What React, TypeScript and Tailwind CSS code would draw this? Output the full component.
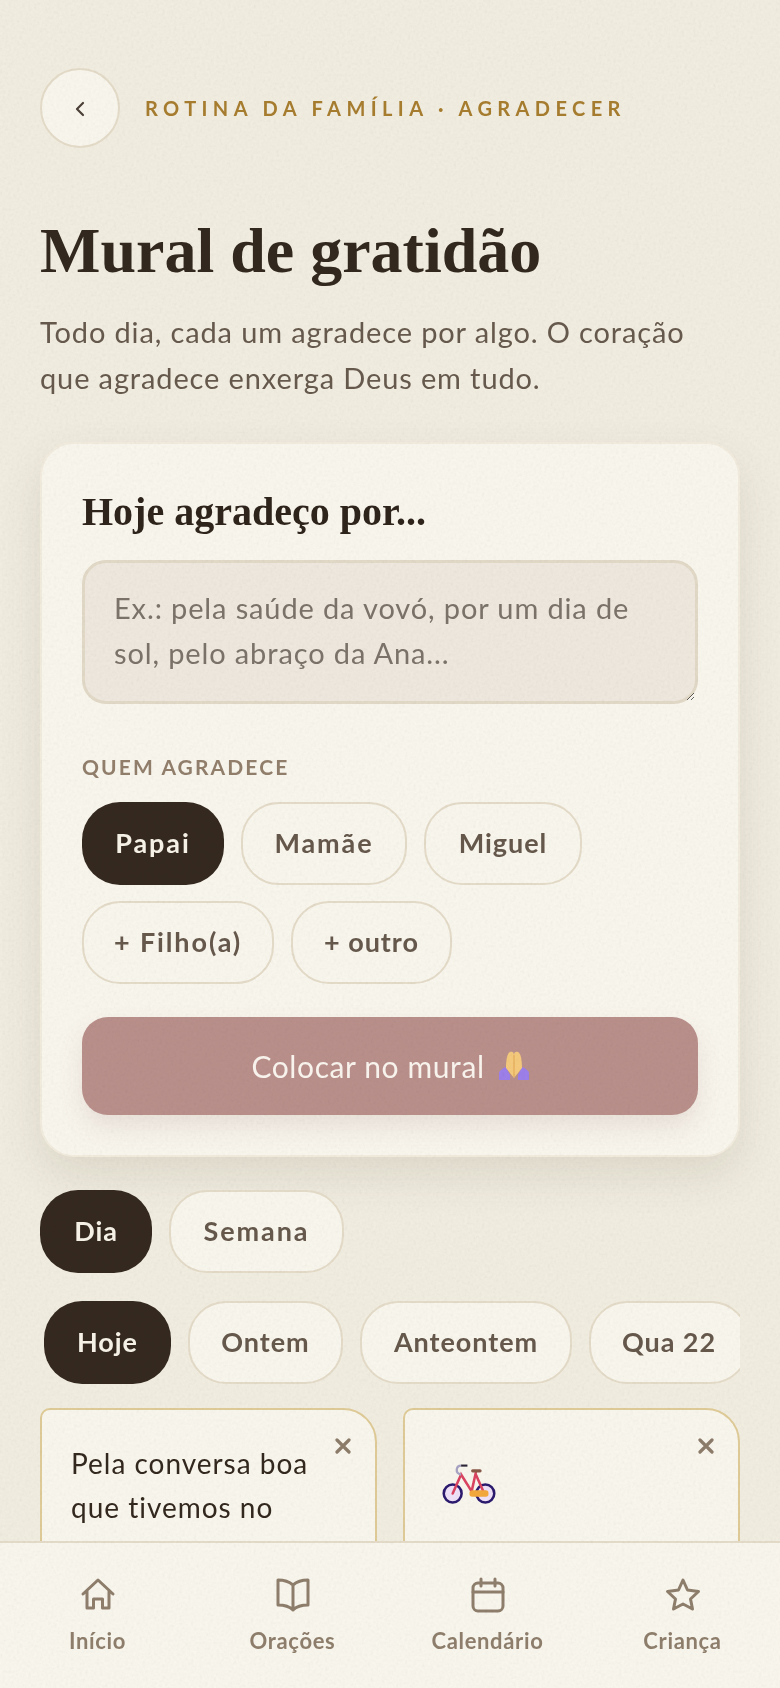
const serif = "font-['Liberation_Serif',serif]";

function PrayingHands() {
  return (
    <svg viewBox="0 0 30 30" className="h-[30px] w-[30px]" aria-hidden="true">
      <path d="M0 29V22C0 20 4 17 7 16L11 24V29Z" fill="#9d80ea" />
      <path d="M30 29V22C30 20 26 17 23 16L19 24V29Z" fill="#9d80ea" />
      <path d="M15 27L7 17C7 10 8 2 11 1C13 0 15 1 15 4C15 1 17 0 19 1C22 2 23 10 23 17Z" fill="#f6cb7d" />
      <path d="M15 4V26" stroke="#e2a755" strokeWidth="1" />
    </svg>
  );
}

function Bicycle() {
  return (
    <svg viewBox="0 0 51 38" className="h-[40px] w-[54px]" aria-hidden="true" fill="none">
      <circle cx="10" cy="28" r="8.5" fill="#f0e2f8" stroke="#2b1a6e" strokeWidth="2.4" />
      <circle cx="41" cy="28" r="8.5" fill="#f0e2f8" stroke="#2b1a6e" strokeWidth="2.4" />
      <path d="M10 28L18 10L28 26M32 8L28 26M32 10L40 28" stroke="#dc4460" strokeWidth="2.4" strokeLinecap="round" />
      <path d="M29 6.5H36" stroke="#8a5a48" strokeWidth="3" strokeLinecap="round" />
      <path d="M18 10C12 9 13 1.5 18 1.5" stroke="#a9a4c4" strokeWidth="2.2" />
      <path d="M18 1.5H24" stroke="#2b2436" strokeWidth="2" />
      <rect x="26" y="25" width="18" height="6" rx="2.5" fill="#f5a93c" />
    </svg>
  );
}

function TabIcon({ children }: { children: React.ReactNode }) {
  return (
    <svg
      viewBox="0 0 36 36"
      className="h-9 w-9"
      fill="none"
      stroke="currentColor"
      strokeWidth="3"
      strokeLinecap="round"
      strokeLinejoin="round"
      aria-hidden="true"
    >
      {children}
    </svg>
  );
}

function Pill({
  label,
  width,
  active,
  strong,
  wide,
}: {
  label: string;
  width: string;
  active?: boolean;
  strong?: boolean;
  wide?: boolean;
}) {
  const tone = active
    ? "bg-[#35291f] text-[#f8f4ea]"
    : `border-2 border-[#e5dcc9] text-[#66594c] ${strong ? "bg-[#faf7ef]" : ""}`;
  return (
    <button
      className={`h-[83px] shrink-0 rounded-[38px] text-[27px] font-bold ${wide ? "tracking-[0.07em]" : "tracking-[0.035em]"} ${width} ${tone}`}
    >
      {label}
    </button>
  );
}

function Note({ children }: { children: React.ReactNode }) {
  return (
    <div className="relative h-[300px] rounded-tl-[10px] rounded-tr-[34px] border-2 border-[#e0cc97] bg-[#faf7ef] px-7 pt-[31px]">
      <svg
        viewBox="0 0 16 16"
        className="absolute right-[24px] top-[28px] h-4 w-4 text-[#8d7c6a]"
        fill="none"
        stroke="currentColor"
        strokeWidth="3.2"
        strokeLinecap="round"
        aria-hidden="true"
      >
        <path d="M2 2L14 14M14 2L2 14" />
      </svg>
      {children}
    </div>
  );
}

export default function App() {
  return (
    <div className="relative h-[1688px] overflow-hidden bg-[#f2eee2] font-['Lato',sans-serif] text-[#33281e]">
      <main className="px-10 pt-[68px]">
        <header className="flex items-center gap-[25px]">
          <button className="flex h-[80px] w-[80px] items-center justify-center rounded-full border-2 border-[#e5dcc9] bg-[#faf7ef]">
            <svg
              viewBox="0 0 24 24"
              className="mt-0.5 h-6 w-6 text-[#4c4037]"
              fill="none"
              stroke="currentColor"
              strokeWidth="2.2"
              strokeLinecap="round"
              strokeLinejoin="round"
              aria-hidden="true"
            >
              <path d="M15 6L9 12L15 18" />
            </svg>
          </button>
          <p className="text-[20px] font-bold tracking-[0.27em] text-[#a87d2e]">ROTINA DA FAMÍLIA · AGRADECER</p>
        </header>

        <h1 className={`mt-[67px] text-[64px] font-bold leading-[72px] text-[#33281e] ${serif}`}>Mural de gratidão</h1>
        <p className="mt-[22px] text-[29px] leading-[46px] tracking-[0.03em] text-[#675a4d]">
          Todo dia, cada um agradece por algo. O coração
          <br />
          que agradece enxerga Deus em tudo.
        </p>

        <section className="mt-[41px] rounded-[34px] border-2 border-[#f3eddf] bg-[#faf7ef] px-10 pb-10 pt-[46px] shadow-[0_18px_44px_rgba(90,70,40,0.12)]">
          <h2 className={`text-[40px] font-bold leading-[44px] text-[#2e241b] ${serif}`}>Hoje agradeço por...</h2>
          <textarea
            className="mt-[26px] block h-[144px] w-full rounded-[24px] border-[3px] border-[#e3dac8] bg-[#efe9df] pl-[29px] pr-7 pt-[22px] text-[29px] leading-[45px] tracking-[0.03em] outline-none placeholder:text-[#7c746b]"
            placeholder="Ex.: pela saúde da vovó, por um dia de sol, pelo abraço da Ana..."
          />
          <p className="mt-[50px] text-[21px] font-bold leading-[26px] tracking-[0.1em] text-[#927f6c]">QUEM AGRADECE</p>
          <div className="mt-[22px] flex flex-wrap gap-x-[17px] gap-y-4">
            <Pill label="Papai" width="w-[142px]" active wide />
            <Pill label="Mamãe" width="w-[166px]" wide />
            <Pill label="Miguel" width="w-[158px]" />
            <Pill label="+ Filho(a)" width="w-[192px]" wide />
            <Pill label="+ outro" width="w-[161px]" />
          </div>
          <button className="mt-[33px] flex h-[98px] w-full items-center justify-center gap-[14px] rounded-[26px] bg-[#ba908b] text-[30px] tracking-[0.02em] text-[#fbf6ef] shadow-[0_12px_24px_rgba(140,100,95,0.14)]">
            Colocar no mural
            <PrayingHands />
          </button>
        </section>

        <div className="mt-[33px] flex gap-[17px]">
          <Pill label="Dia" width="w-[112px]" active />
          <Pill label="Semana" width="w-[175px]" strong wide />
        </div>

        <div className="mt-[28px] flex w-[700px] gap-[17px] overflow-hidden pl-1">
          <Pill label="Hoje" width="w-[127px]" active />
          <Pill label="Ontem" width="w-[155px]" strong />
          <Pill label="Anteontem" width="w-[212px]" strong />
          <Pill label="Qua 22" width="w-[160px]" strong />
        </div>

        <div className="mt-[24px] grid grid-cols-2 gap-[26px]">
          <Note>
            <p className="pl-px text-[28px] leading-[44px] tracking-[0.035em] text-[#33281e]">
              Pela conversa boa
              <br />
              que tivemos no
            </p>
          </Note>
          <Note>
            <div className="pl-[9px] pt-[23px]">
              <Bicycle />
            </div>
          </Note>
        </div>
      </main>

      <nav className="absolute inset-x-0 bottom-0 grid h-[147px] grid-cols-4 border-t-2 border-[#e5dcc9] bg-[#faf7ef] pt-[34px]">
        <div className="flex flex-col items-center text-[#8f7f6c]">
          <TabIcon>
            <path d="M3 17L18 3L33 17M7 14V31H13.5V22H22.5V31H29V14" />
          </TabIcon>
          <span className="mt-[15px] text-[22px] font-bold leading-[26px] tracking-[0.03em]">Início</span>
        </div>
        <div className="flex flex-col items-center text-[#8f7f6c]">
          <TabIcon>
            <path d="M18 8C14 4.5 8 3 3 3V28C8 28 14 29 18 33C22 29 28 28 33 28V3C28 3 22 4.5 18 8ZM18 8V33" />
          </TabIcon>
          <span className="mt-[15px] text-[22px] font-bold leading-[26px] tracking-[0.03em]">Orações</span>
        </div>
        <div className="flex flex-col items-center text-[#8f7f6c]">
          <TabIcon>
            <rect x="3" y="6" width="30" height="28" rx="5" />
            <path d="M3 15H33M11 2V9M25 2V9" />
          </TabIcon>
          <span className="mt-[15px] text-[22px] font-bold leading-[26px] tracking-[0.03em]">Calendário</span>
        </div>
        <div className="flex flex-col items-center text-[#8f7f6c]">
          <TabIcon>
            <path d="M18 3L22.5 13L33.5 14.5L25.5 22L27.5 32L18 27L8.5 32L10.5 22L2.5 14.5L13.5 13Z" />
          </TabIcon>
          <span className="mt-[15px] text-[22px] font-bold leading-[26px] tracking-[0.03em]">Criança</span>
        </div>
      </nav>

      <svg className="pointer-events-none absolute inset-0 h-full w-full opacity-[0.11] mix-blend-multiply" aria-hidden="true">
        <filter id="grain">
          <feTurbulence type="fractalNoise" baseFrequency="0.35" numOctaves="3" stitchTiles="stitch" />
          <feColorMatrix type="saturate" values="0" />
        </filter>
        <rect width="100%" height="100%" filter="url(#grain)" />
      </svg>
    </div>
  );
}
